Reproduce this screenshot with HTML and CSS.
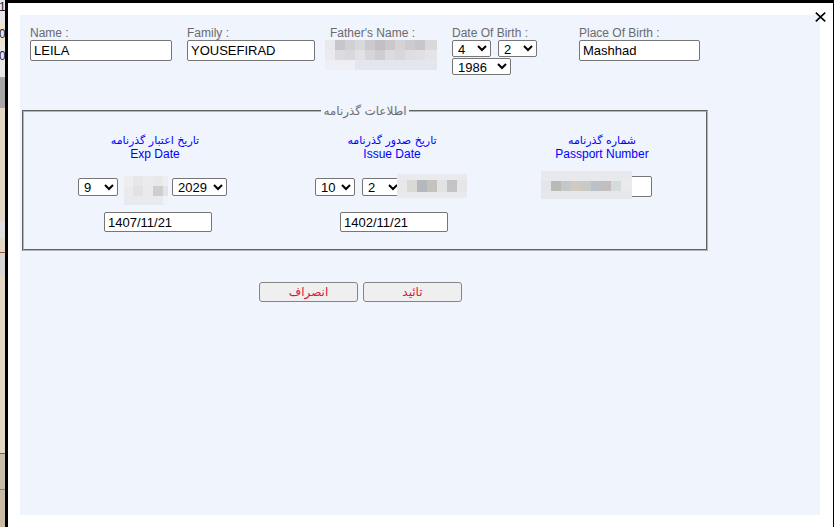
FILE: index.html
```html
<!DOCTYPE html>
<html lang="en">

<head>
    <meta charset="UTF-8">
    <meta name="viewport" content="width=device-width, initial-scale=1.0">
    <title>Passport Info</title>
    <link rel="stylesheet" href="styles.css">
</head>

<body>
    <div class="page">
        <!-- strip of the page behind the dialog -->
        <div class="edge">
            <div class="edge-row row-a"><span>1</span></div>
            <div class="edge-row row-b"><span>0</span></div>
            <div class="edge-row row-c"><span>0</span></div>
            <div class="edge-row row-d"></div>
            <div class="edge-row row-e"></div>
            <div class="edge-row row-f"></div>
            <div class="edge-row row-g"></div>
            <div class="edge-row line-brown"></div>
            <div class="edge-row row-h"></div>
            <div class="edge-row row-i"></div>
            <div class="edge-row line-brown"></div>
            <div class="edge-row row-j"></div>
            <div class="edge-row line-dark"></div>
            <div class="edge-row row-k"></div>
        </div>

        <div class="modal">
            <button type="button" class="close-btn" aria-label="Close">
                <svg width="11" height="10" viewBox="0 0 11 10">
                    <path d="M0.8 0.6 L10.2 9.4 M10.2 0.6 L0.8 9.4" stroke="#000" stroke-width="1.6" fill="none" />
                </svg>
            </button>

            <div class="panel">
                <form id="passportForm">
                    <div class="top-row">
                        <div class="field f-name">
                            <label for="name">Name :</label>
                            <input class="text-input" type="text" id="name" value="LEILA">
                        </div>
                        <div class="field f-family">
                            <label for="family">Family :</label>
                            <input class="text-input" type="text" id="family" value="YOUSEFIRAD">
                        </div>
                        <div class="field f-father">
                            <label for="father">Father's Name :</label>
                            <input class="text-input" type="text" id="father" value="">
                            <div class="mosaic mosaic-father"></div>
                        </div>
                        <div class="field f-dob">
                            <label>Date Of Birth :</label>
                            <div class="dob-selects">
                                <select class="sel sel-s"><option>4</option></select>
                                <select class="sel sel-s"><option>2</option></select>
                                <select class="sel sel-y"><option>1986</option></select>
                            </div>
                        </div>
                        <div class="field f-place">
                            <label for="place">Place Of Birth :</label>
                            <input class="text-input" type="text" id="place" value="Mashhad">
                        </div>
                    </div>

                    <fieldset class="passport-box">
                        <legend>اطلاعات گذرنامه</legend>
                        <div class="passport-cols">
                            <div class="col col-exp">
                                <div class="col-title">
                                    <span class="fa">تاریخ اعتبار گذرنامه</span>
                                    <span class="en">Exp Date</span>
                                </div>
                                <div class="date-selects">
                                    <select class="sel sel-m"><option>9</option></select>
                                    <select class="sel sel-m"><option>21</option></select>
                                    <select class="sel sel-yr"><option>2029</option></select>
                                    <div class="mosaic mosaic-exp"></div>
                                </div>
                                <input class="text-input date-text" type="text" value="1407/11/21">
                            </div>

                            <div class="col col-issue">
                                <div class="col-title">
                                    <span class="fa">تاریخ صدور گذرنامه</span>
                                    <span class="en">Issue Date</span>
                                </div>
                                <div class="date-selects">
                                    <select class="sel sel-m"><option>10</option></select>
                                    <select class="sel sel-m"><option>2</option></select>
                                    <select class="sel sel-yr"><option>2024</option></select>
                                    <div class="mosaic mosaic-issue"></div>
                                </div>
                                <input class="text-input date-text" type="text" value="1402/11/21">
                            </div>

                            <div class="col col-number">
                                <div class="col-title">
                                    <span class="fa">شماره گذرنامه</span>
                                    <span class="en">Passport Number</span>
                                </div>
                                <div class="number-wrap">
                                    <input class="text-input number-input" type="text" value="">
                                    <div class="mosaic mosaic-number"></div>
                                </div>
                            </div>
                        </div>
                    </fieldset>

                    <div class="actions">
                        <button type="button" class="btn">انصراف</button>
                        <button type="submit" class="btn">تائید</button>
                    </div>
                </form>
            </div>
        </div>
    </div>
</body>

</html>
```

FILE: styles.css
```css
body {
    margin: 0;
    font-family: "Liberation Sans", "DejaVu Sans", sans-serif;
    background: #fff;
    overflow: hidden;
}

.page {
    display: flex;
    height: 527px;
}

/* page behind the dialog */
.edge {
    width: 5px;
    flex-shrink: 0;
    display: flex;
    flex-direction: column;
    overflow: hidden;
    font-size: 12px;
    color: #223;
}

.edge-row span {
    display: block;
    margin-left: -1px;
    line-height: 14px;
}

.row-a { height: 23px; background: #e7e7e7; padding-top: 0; }
.row-b { height: 22px; background: #ebe6cd; padding-top: 0; }
.row-b span, .row-c span { padding-top: 4px; }
.row-c { height: 32px; background: #e7e7e7; }
.row-d { height: 31px; background: #a6a6a6; }
.row-e { height: 113px; background: #e3d8c6; }
.row-f { height: 17px; background: #dedede; }
.row-g { height: 14px; background: #e3d8c6; }
.line-brown { height: 1px; background: #8b5a2b; }
.line-dark { height: 1px; background: #8a806f; }
.row-h { height: 22px; background: #d6d6d6; }
.row-i { height: 178px; background: #e3d8c6; }
.row-j { height: 35px; background: #c8bda6; }
.row-k { height: 37px; background: #c8bca5; }

.modal {
    flex: 1;
    position: relative;
    background: #fff;
    border-top: 3px solid #000;
    border-left: 3px solid #000;
    border-right: 1px solid #000;
    padding: 12px 13px 12px 12px;
}

.close-btn {
    position: absolute;
    top: 9px;
    right: 7px;
    width: 11px;
    height: 10px;
    padding: 0;
    border: none;
    background: none;
    cursor: pointer;
    line-height: 0;
}

.panel {
    height: 100%;
    box-sizing: border-box;
    background: #eff4fd;
    padding: 12px 0 0 2px;
}

/* top row of personal fields */
.top-row {
    display: flex;
    gap: 15px;
    padding-left: 8px;
}

.field {
    position: relative;
}

.field label {
    display: block;
    font-size: 12px;
    line-height: 13px;
    color: #6b6b6b;
}

.text-input {
    box-sizing: border-box;
    height: 21px;
    margin: 0;
    padding: 0 3px;
    border: 1px solid #767676;
    border-radius: 2px;
    background: #fff;
    font-family: "Liberation Sans", sans-serif;
    font-size: 13px;
    color: #000;
}

.f-name .text-input { width: 142px; }
.f-family .text-input { width: 128px; }
.f-father .text-input { width: 107px; }
.f-place .text-input { width: 121px; }
.f-dob { width: 112px; }

.dob-selects {
    display: flex;
    flex-wrap: wrap;
    column-gap: 7px;
    row-gap: 1px;
}

.sel {
    box-sizing: border-box;
    height: 17px;
    margin: 0;
    padding: 0 0 0 1px;
    border: 1px solid #767676;
    border-radius: 2px;
    background: #fff;
    font-family: "Liberation Sans", sans-serif;
    font-size: 13px;
    color: #000;
}

.sel-s { width: 39px; }
.sel-y { width: 59px; }

/* redacted values */
.mosaic {
    position: absolute;
}

.mosaic-father {
    left: -5px;
    top: 13px;
    width: 112px;
    height: 30px;
    background:
        linear-gradient(90deg, #e9e9ec 0 10px, #c8c6cb 10px 20px, #d1d0d4 20px 30px, #d8d8db 30px 40px, #cbc9ce 40px 50px, #c2c0c5 50px 60px, #cac8cd 60px 70px, #d4d3d6 70px 80px, #cdcbd0 80px 90px, #c7c6ca 90px 100px, #d9d9dc 100px) 0 0 / 100% 10px no-repeat,
        linear-gradient(90deg, #ebebee 0 10px, #dcdce0 10px 20px, #d9d8dc 20px 30px, #e2e2e4 30px 40px, #d6d5d9 40px 50px, #cfcdd1 50px 60px, #dcdbde 60px 70px, #d8d7db 70px 80px, #dedde0 80px 90px, #e0e0e2 90px 100px, #e4e4e6 100px) 0 10px / 100% 10px no-repeat,
        linear-gradient(90deg, #edeff4 0 30px, #e4e6ed 30px) 0 20px / 100% 10px no-repeat;
}

.mosaic-exp {
    left: 46px;
    top: -2px;
    width: 44px;
    height: 29px;
    background:
        linear-gradient(90deg, #eeeef1 0 9px, #e7e6e9 9px 19px, #ebebed 19px 29px, #e8e8ea 29px 39px, #eeeef1 39px) 0 0 / 100% 10px no-repeat,
        linear-gradient(90deg, #ebebee 0 9px, #e2e1e4 9px 19px, #eaeaec 19px 29px, #cececf 29px 39px, #e3e3e6 39px) 0 10px / 100% 10px no-repeat,
        linear-gradient(90deg, #e8eaf0 0 39px, #eef2fa 39px) 0 20px / 100% 9px no-repeat;
}

.mosaic-issue {
    left: 82px;
    top: -4px;
    width: 70px;
    height: 24px;
    background:
        linear-gradient(#e9eaee, #e9eaee) 0 0 / 100% 6px no-repeat,
        linear-gradient(90deg, #e8e8ea 0 10px, #dad9d4 10px 20px, #b6b8c0 20px 30px, #c4c2bb 30px 40px, #e3e3e6 40px 50px, #c3c3c5 50px 60px, #e6e6e9 60px) 0 6px / 100% 12px no-repeat,
        linear-gradient(#e9eaee, #e9eaee) 0 18px / 100% 6px no-repeat;
}

/* passport fieldset */
.passport-box {
    box-sizing: border-box;
    width: 686px;
    margin: 29px 0 0 0;
    padding: 0 0 17px 0;
    border: 2px groove #b4b4b4;
}

.passport-box legend {
    margin: 0 auto;
    padding: 0 2px;
    font-size: 12px;
    line-height: 14px;
    color: #6e6e6e;
}

.passport-cols {
    display: grid;
    grid-template-columns: 262px 212px 208px;
}

.col-title {
    padding-top: 16px;
    text-align: center;
    color: #0000ff;
}

.col-title .fa {
    display: block;
    font-family: "DejaVu Sans", sans-serif;
    font-size: 11px;
    line-height: 14px;
}

.col-title .en {
    display: block;
    font-size: 12px;
    line-height: 13px;
}

.date-selects {
    position: relative;
    display: flex;
    gap: 7px;
    margin-top: 17px;
}

.date-selects .sel {
    height: 18px;
}

.sel-m { width: 40px; }
.sel-yr { width: 55px; }

.date-text {
    display: block;
    width: 108px;
    height: 20px;
    margin-top: 16px;
}

.col-exp .date-selects { margin-left: 54px; }
.col-exp .date-text { margin-left: 80px; }
.col-issue .date-selects { margin-left: 29px; }
.col-issue .date-text { margin-left: 54px; }

.number-wrap {
    position: relative;
    margin: 15px 0 0 43px;
    width: 111px;
}

.number-input {
    display: block;
    width: 111px;
    height: 21px;
}

.mosaic-number {
    left: 0;
    top: -5px;
    width: 91px;
    height: 28px;
    background:
        linear-gradient(#e8e9ed, #e8e9ed) 0 0 / 100% 10px no-repeat,
        linear-gradient(90deg, #e4e5e8 0 10px, #b9b9b5 10px 20px, #c5c8c7 20px 30px, #d0cac3 30px 40px, #c8cac8 40px 50px, #bcc1c7 50px 60px, #c4bdbe 60px 70px, #d7dadd 70px 80px, #e8eaec 80px) 0 10px / 100% 10px no-repeat,
        linear-gradient(#e6e7eb, #e6e7eb) 0 20px / 100% 8px no-repeat;
}

/* bottom buttons */
.actions {
    display: flex;
    gap: 5px;
    margin: 31px 0 0 237px;
}

.btn {
    box-sizing: border-box;
    width: 99px;
    height: 20px;
    padding: 0;
    border: 1px solid #858585;
    border-radius: 3px;
    background: #efefef;
    font-family: "DejaVu Sans", sans-serif;
    font-size: 12px;
    color: #dc143c;
    cursor: pointer;
}
```
